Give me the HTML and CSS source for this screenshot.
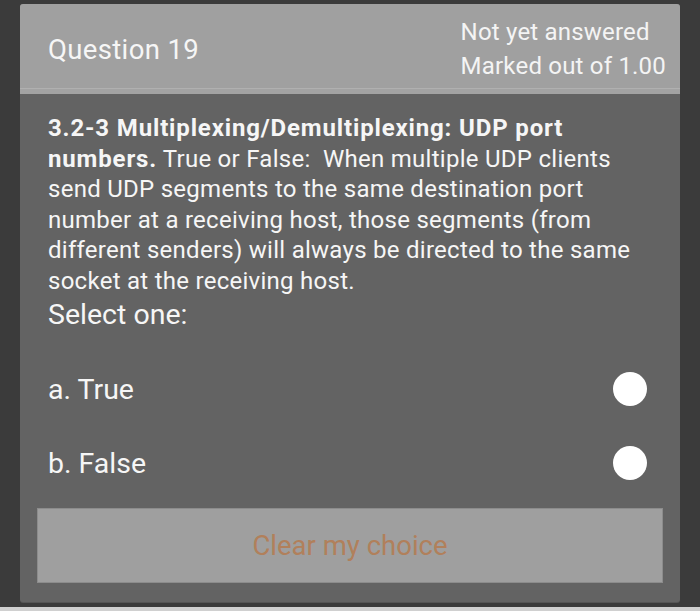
FILE: index.html
```html
<!DOCTYPE html>
<html>
<head>
<meta charset="utf-8">
<link rel="stylesheet" href="styles.css">
</head>
<body>
<div class="page">
  <div class="card">
    <div class="head">
      <div class="qno">Question 19</div>
      <div class="status">
        <div>Not yet answered</div>
        <div>Marked out of 1.00</div>
      </div>
    </div>
    <div class="content">
      <p class="qtext"><b>3.2-3 Multiplexing/Demultiplexing: UDP port numbers.</b> True or False:&nbsp; When multiple UDP clients send UDP segments to the same destination port number at a receiving host, those segments (from different senders) will always be directed to the same socket at the receiving host.</p>
      <div class="prompt">Select one:</div>
      <div class="options">
        <label class="opt"><span>a. True</span><span class="radio"></span></label>
        <label class="opt"><span>b. False</span><span class="radio"></span></label>
      </div>
      <div class="clear">Clear my choice</div>
    </div>
  </div>
  <div class="strip"></div>
</div>
</body>
</html>
```

FILE: styles.css
```css
html, body {
  margin: 0;
  padding: 0;
  background: #3b3b3b;
}
body {
  font-family: Roboto, "Liberation Sans", sans-serif;
  color: #f6f6f6;
}
.page {
  width: 700px;
  height: 611px;
  display: flex;
  flex-direction: column;
  overflow: hidden;
}
.card {
  margin: 4px 20px 0 20px;
  height: 599px;
  background: #636363;
  border-radius: 3px;
  box-shadow: 0 1px 0 #555;
  display: flex;
  flex-direction: column;
  overflow: hidden;
}
.head {
  height: 85px;
  background: #a0a0a0;
  border-bottom: 5px solid #a3a3a3;
  box-shadow: inset 0 -6px 0 -5px #b0b0b0;
  display: flex;
  justify-content: space-between;
  align-items: center;
  padding: 0 14px 0 28px;
}
.qno {
  font-size: 27.5px;
  letter-spacing: 0.35px;
  padding-top: 6px;
}
.status {
  font-size: 24px;
  letter-spacing: 0.2px;
  line-height: 34px;
  color: #f4f4f4;
  padding-top: 5px;
}
.content {
  padding: 19px 28px 0 28px;
  display: flex;
  flex-direction: column;
}
.qtext {
  margin: 0;
  font-size: 24px;
  letter-spacing: 0.27px;
  line-height: 30.5px;
}
.qtext b {
  font-weight: 700;
  letter-spacing: 0.85px;
}
.prompt {
  font-size: 28.5px;
  line-height: 34px;
  margin-top: 2px;
}
.options {
  display: flex;
  flex-direction: column;
  gap: 40px;
  margin-top: 40px;
}
.opt {
  display: flex;
  justify-content: space-between;
  align-items: center;
  font-size: 28.5px;
  height: 34px;
  padding-right: 5px;
}
.radio {
  width: 34px;
  height: 34px;
  border-radius: 50%;
  background: #ffffff;
}
.clear {
  margin: 28px -11px 0 -11px;
  height: 75px;
  background: #9f9f9f;
  border: 1px solid #8c8c8c;
  box-sizing: border-box;
  display: flex;
  align-items: center;
  justify-content: center;
  color: #b1805b;
  font-size: 27.5px;
}
.strip {
  margin-top: 5px;
  height: 4px;
  background: #d0d0d0;
}
```
